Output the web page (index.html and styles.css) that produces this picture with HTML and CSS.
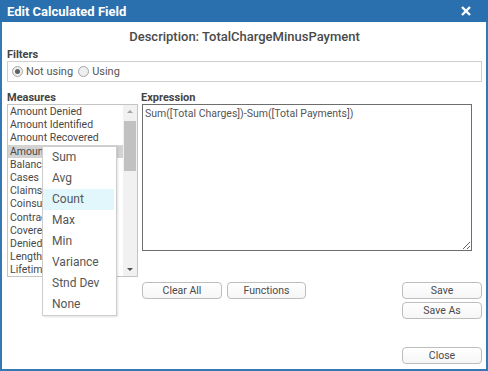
FILE: index.html
```html
<!DOCTYPE html>
<html>
<head>
    <title>Edit Calculated Field</title>
    <meta charset="utf-8" />
    <link rel="stylesheet" href="styles.css">
</head>
<body>
    <div class="dialog">
        <div class="titlebar">
            <span class="title">Edit Calculated Field</span>
            <svg class="close-x" width="10" height="10" viewBox="0 0 10 10">
                <path d="M1 1 L9 9 M9 1 L1 9" stroke="#fff" stroke-width="2.4" />
            </svg>
        </div>
        <div class="content">
            <div class="desc">Description: TotalChargeMinusPayment</div>

            <div class="label">Filters</div>
            <div class="filterbox">
                <span class="radio checked"></span><span class="radio-text">Not using</span>
                <span class="radio"></span><span class="radio-text">Using</span>
            </div>

            <div class="workspace">
                <div class="measures">
                    <div class="label">Measures</div>
                    <div class="listbox">
                        <div class="items">
                            <div class="item">Amount Denied</div>
                            <div class="item">Amount Identified</div>
                            <div class="item">Amount Recovered</div>
                            <div class="item selected">Amount Paid</div>
                            <div class="item">Balance</div>
                            <div class="item">Cases</div>
                            <div class="item">Claims</div>
                            <div class="item">Coinsurance</div>
                            <div class="item">Contractual</div>
                            <div class="item">Covered</div>
                            <div class="item">Denied</div>
                            <div class="item">Length of Stay</div>
                            <div class="item">Lifetime</div>
                        </div>
                        <div class="scrollbar">
                            <div class="arrow up"></div>
                            <div class="track"><div class="thumb"></div></div>
                            <div class="arrow down"></div>
                        </div>
                    </div>
                </div>
                <div class="expression">
                    <div class="label">Expression</div>
                    <textarea class="expr-input">Sum([Total Charges])-Sum([Total Payments])</textarea>
                </div>
            </div>

            <div class="actions">
                <div class="left-buttons">
                    <button class="btn">Clear All</button>
                    <button class="btn">Functions</button>
                </div>
                <div class="right-buttons">
                    <button class="btn">Save</button>
                    <button class="btn">Save As</button>
                </div>
            </div>

            <div class="close-row">
                <button class="btn">Close</button>
            </div>
        </div>

        <div class="menu">
            <div class="menu-item">Sum</div>
            <div class="menu-item">Avg</div>
            <div class="menu-item hover">Count</div>
            <div class="menu-item">Max</div>
            <div class="menu-item">Min</div>
            <div class="menu-item">Variance</div>
            <div class="menu-item">Stnd Dev</div>
            <div class="menu-item">None</div>
        </div>
    </div>
</body>
</html>
```

FILE: styles.css
```css
html, body {
    margin: 0;
    padding: 0;
    background: #fff;
}
body {
    font-family: Roboto, "Liberation Sans", sans-serif;
    color: #444;
}
.dialog {
    position: relative;
    box-sizing: border-box;
    width: 488px;
    height: 371px;
    border: 2px solid #3478b6;
    border-top: 0;
}
.titlebar {
    height: 22px;
    margin: 0 -2px;
    padding: 0 17px 0 7px;
    background: #2b70ae;
    display: flex;
    align-items: center;
    justify-content: space-between;
}
.title {
    color: #fff;
    font-weight: bold;
    font-size: 13px;
}
.close-x {
    display: block;
}
.content {
    padding: 0 4px 0 5px;
}
.desc {
    margin-top: 7px;
    text-align: center;
    font-size: 13px;
    font-weight: 500;
    line-height: 16px;
    color: #4a4a4a;
}
.label {
    font-size: 11px;
    font-weight: bold;
    line-height: 13px;
    color: #444;
}
.content > .label {
    margin-top: 3px;
}
.filterbox {
    height: 19px;
    border: 1px solid #cfcfcf;
    display: flex;
    align-items: center;
    padding-left: 4px;
    font-size: 11px;
    color: #555;
}
.radio {
    width: 9px;
    height: 9px;
    border: 1px solid #a5a5a5;
    border-radius: 50%;
    background: #efefef;
    box-sizing: content-box;
    position: relative;
    margin-right: 3px;
}
.radio.checked::after {
    content: "";
    position: absolute;
    left: 2px;
    top: 2px;
    width: 5px;
    height: 5px;
    border-radius: 50%;
    background: #606060;
}
.radio-text {
    margin-right: 5px;
}
.workspace {
    margin-top: 9px;
    display: grid;
    grid-template-columns: 131px 1fr;
    column-gap: 3px;
}
.listbox {
    height: 171px;
    border: 1px solid #c4c4c4;
    display: flex;
}
.items {
    flex: 1;
    overflow: hidden;
}
.item {
    height: 13.2px;
    line-height: 13px;
    font-size: 10.5px;
    color: #484848;
    padding-left: 2px;
    white-space: nowrap;
}
.item.selected {
    background: #d3d3d3;
}
.scrollbar {
    width: 14px;
    background: #f1f1f1;
    display: flex;
    flex-direction: column;
}
.arrow {
    height: 14px;
    position: relative;
}
.arrow::after {
    content: "";
    position: absolute;
    left: 4px;
    border-left: 3px solid transparent;
    border-right: 3px solid transparent;
}
.arrow.up::after {
    top: 5px;
    border-bottom: 3px solid #a3a3a3;
}
.arrow.down::after {
    top: 6px;
    border-top: 3px solid #505050;
}
.track {
    flex: 1;
    padding: 2px 1px 0 1px;
}
.thumb {
    height: 50px;
    background: #c1c1c1;
}
.expr-input {
    display: block;
    box-sizing: border-box;
    width: 330px;
    height: 147px;
    margin: 0 0 0 1px;
    padding: 2px 2px;
    border: 1px solid #6e6e6e;
    font-family: Roboto, "Liberation Sans", sans-serif;
    font-size: 10.5px;
    line-height: 13px;
    color: #555;
    outline: none;
}
.actions {
    margin-top: 5px;
    margin-left: 135px;
    display: flex;
    justify-content: space-between;
}
.left-buttons {
    display: flex;
    gap: 5px;
}
.right-buttons {
    display: flex;
    flex-direction: column;
    gap: 3px;
}
.btn {
    box-sizing: border-box;
    display: block;
    width: 80px;
    height: 17px;
    padding: 0;
    border: 1px solid #bdbdbd;
    border-radius: 4px;
    background: linear-gradient(#ffffff, #f6f6f6);
    font-family: Roboto, "Liberation Sans", sans-serif;
    font-size: 10.5px;
    font-weight: normal;
    color: #4a4a4a;
}
.left-buttons .btn + .btn {
    width: 79px;
}
.close-row {
    margin-top: 28px;
    display: flex;
    justify-content: flex-end;
}
.menu {
    position: absolute;
    left: 40px;
    top: 146px;
    width: 73px;
    border: 1px solid #cdcdcd;
    background: #fff;
    box-shadow: 1px 1px 2px rgba(0, 0, 0, 0.12);
}
.menu-item {
    height: 21px;
    line-height: 21px;
    padding-left: 9px;
    font-size: 12px;
    color: #555;
}
.menu-item.hover {
    background: #e1f7fb;
    margin-right: 2px;
}
```
